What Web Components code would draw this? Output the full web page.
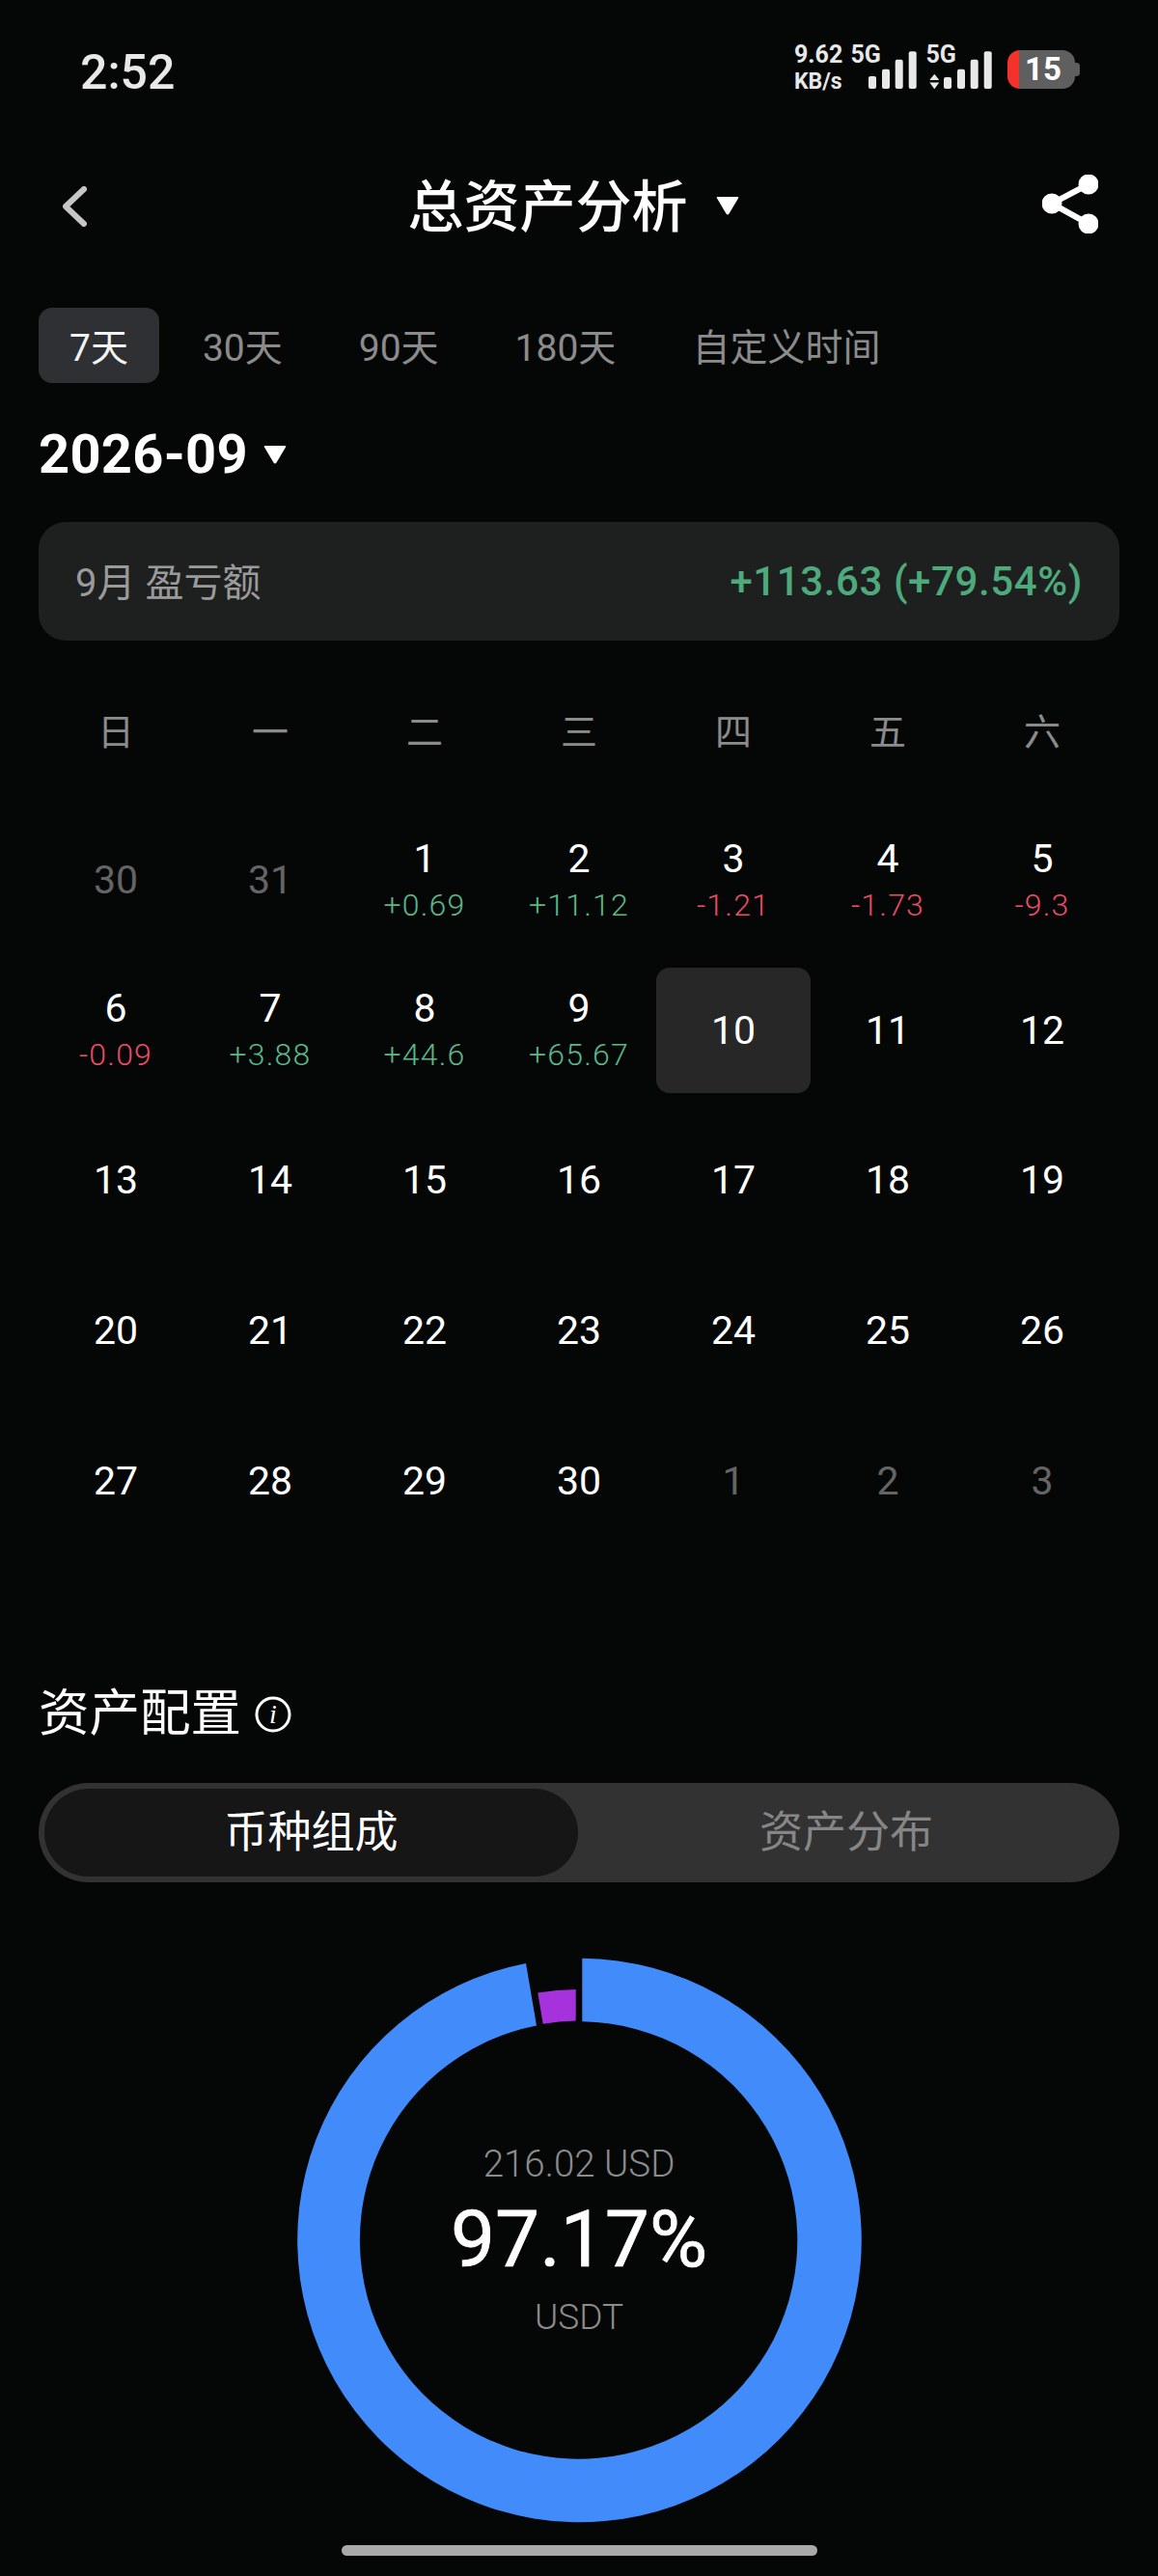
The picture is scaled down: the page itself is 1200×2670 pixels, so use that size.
<!DOCTYPE html>
<html lang="zh">
<head>
<meta charset="utf-8">
<title>总资产分析</title>
<style>
  html, body { margin: 0; height: 2670px; overflow: hidden; background: #050707; }
  body { font-family: Roboto, "Noto Sans CJK SC", sans-serif; color: #fff; }
</style>
</head>
<body>
<status-bar></status-bar>
<nav-header>总资产分析</nav-header>
<range-tabs></range-tabs>
<month-picker>2026-09</month-picker>
<pnl-card label="9月 盈亏额">+113.63 (+79.54%)</pnl-card>
<pnl-calendar></pnl-calendar>
<section-title>资产配置</section-title>
<seg-toggle first="币种组成" second="资产分布"></seg-toggle>
<donut-chart>
  <span slot="amount">216.02 USD</span>
  <span slot="percent">97.17%</span>
  <span slot="coin">USDT</span>
</donut-chart>
<home-bar></home-bar>

<script>
// small helper, every element below uses it for its shadow root
function shadow (el, html) {
  el.attachShadow({ mode: 'open' }).innerHTML = html;
}

class StatusBar extends HTMLElement {
  constructor () {
    super();
    shadow(this, `
    <style>
      :host { display: flex; justify-content: space-between; align-items: flex-start; height: 130px; padding: 0 81px 0 83px; box-sizing: content-box; color: #e8e8e8; }
      .time { font-size: 50px; font-weight: 500; line-height: 50px; margin-top: 50px; }
      .right { display: flex; align-items: flex-start; margin-top: 48px; font-weight: 700; }
      .speed { width: 58.5px; font-size: 25px; line-height: 18px; }
      .speed div + div { margin-top: 10px; font-size: 23px; }
      .net { display: grid; font-size: 25px; line-height: 18px; }
      .net > * { grid-area: 1 / 1; }
      .net svg { display: block; justify-self: end; }
      .one { width: 68.5px; margin-right: 9.5px; }
      .two { width: 68.5px; margin-right: 16px; }
      .battery { display: flex; align-items: center; height: 40px; margin-top: 4px; }
      .cell { width: 70px; height: 40px; border-radius: 13px; background: linear-gradient(90deg, #f4322c 0 12.5px, #5f5f5f 12.5px); color: #fff; font-size: 33px; line-height: 40px; text-indent: 18px; box-sizing: border-box; }
      .nub { width: 5px; height: 14px; background: #5f5f5f; border-radius: 0 4px 4px 0; }
    </style>
    <div class="time">2:52</div>
    <div class="right">
      <div class="speed"><div>9.62</div><div>KB/s</div></div>
      <div class="net one">
        <span>5G</span>
        <svg width="67" height="44" viewBox="0 0 67 44" fill="#e8e8e8">
          <rect x="17" y="31" width="8" height="13" rx="2"/><rect x="31" y="23.7" width="8" height="20.3" rx="2"/>
          <rect x="44.7" y="13.7" width="8" height="30.3" rx="2"/><rect x="58.7" y="5.3" width="8" height="38.7" rx="2"/>
        </svg>
      </div>
      <div class="net two">
        <span>5G</span>
        <svg width="67" height="44" viewBox="0 0 67 44" fill="#e8e8e8">
          <path d="M2.3 35 7.3 28.7 12.3 35ZM2.3 37.5 12.3 37.5 7.3 44.3Z"/>
          <rect x="17" y="32" width="8" height="12" rx="2"/><rect x="31" y="23.7" width="8" height="20.3" rx="2"/>
          <rect x="44.7" y="13.7" width="8" height="30.3" rx="2"/><rect x="58.7" y="5.3" width="8" height="38.7" rx="2"/>
        </svg>
      </div>
      <div class="battery"><div class="cell">15</div><div class="nub"></div></div>
    </div>`);
  }
}
customElements.define('status-bar', StatusBar);

class NavHeader extends HTMLElement {
  constructor () {
    super();
    shadow(this, `
    <style>
      :host { display: grid; grid-template-columns: 1fr auto 1fr; align-items: center; height: 160px; padding: 0 62px 0 65px; }
      .title { display: flex; align-items: center; font-size: 58px; font-weight: 500; margin-right: 15px; white-space: nowrap; }
      .title svg { margin-left: 29px; margin-top: 6px; }
      .back { display: block; margin-top: 8px; }
      .share { display: block; justify-self: end; margin-top: 2px; }
    </style>
    <svg class="back" width="25" height="42" viewBox="0 0 25 42" fill="none" stroke="#c6c6c6" stroke-width="6" stroke-linecap="round" stroke-linejoin="round"><path d="M22 3 3 21 22 39"/></svg>
    <div class="title"><slot></slot><svg width="24" height="19" viewBox="0 0 24 19" fill="#fff"><path d="M1 1.5Q0 0 2 0H22Q24 0 23 1.5L13.5 17.5Q12 19.5 10.5 17.5Z"/></svg></div>
    <svg class="share" width="58" height="61" viewBox="0 0 58 61" fill="#fff" stroke="#fff" stroke-width="6"><path d="M48 10 10 30 48 51" fill="none"/><circle cx="48" cy="10" r="7.5"/><circle cx="10" cy="30" r="7.5"/><circle cx="48" cy="51" r="7.5"/></svg>`);
  }
}
customElements.define('nav-header', NavHeader);

class RangeTabs extends HTMLElement {
  constructor () {
    super();
    const items = ['7天', '30天', '90天', '180天', '自定义时间'];
    shadow(this, `
    <style>
      :host { display: flex; gap: 11px; margin: 29px 40px 0; height: 78px; }
      span { padding: 0 34px; height: 78px; font-size: 39px; line-height: 84px; color: #8b8b8b; border-radius: 14px; }
      .on { padding: 0 32px; background: #2f3033; color: #f2f2f2; }
    </style>
    ${items.map((t, i) => `<span class="${i === 0 ? 'on' : ''}">${t}</span>`).join('')}`);
  }
}
customElements.define('range-tabs', RangeTabs);

class MonthPicker extends HTMLElement {
  constructor () {
    super();
    shadow(this, `
    <style>
      :host { display: flex; align-items: center; margin: 39px 40px 0; height: 70px; font-size: 56px; font-weight: 700; letter-spacing: .3px; line-height: 70px; }
      svg { margin-left: 16px; margin-top: 1px; }
    </style>
    <slot></slot>
    <svg width="24" height="19" viewBox="0 0 24 19" fill="#fff"><path d="M1 1.5Q0 0 2 0H22Q24 0 23 1.5L13.5 17.5Q12 19.5 10.5 17.5Z"/></svg>`);
  }
}
customElements.define('month-picker', MonthPicker);

class PnlCard extends HTMLElement {
  constructor () {
    super();
    shadow(this, `
    <style>
      :host { display: flex; justify-content: space-between; align-items: center; height: 123px; margin: 35px 40px 0; padding: 0 38px 0 38px; border-radius: 28px; background: #1e1f1f; }
      .label { font-size: 40px; color: #9a9a9a; margin-bottom: 3px; }
      .value { font-size: 42px; font-weight: 500; letter-spacing: .6px; color: #4eaa7c; }
    </style>
    <span class="label">${this.getAttribute('label')}</span>
    <span class="value"><slot></slot></span>`);
  }
}
customElements.define('pnl-card', PnlCard);

class DayCell extends HTMLElement {
  constructor () {
    super();
    const sub = this.getAttribute('sub');
    const tone = sub ? (sub[0] === '+' ? 'up' : 'down') : '';
    shadow(this, `
    <style>
      :host { display: flex; flex-direction: column; align-items: center; justify-content: center; height: 130px; padding-bottom: 1px; box-sizing: border-box; border-radius: 14px; color: #fff; font-size: 41px; }
      :host([sub]) { padding-bottom: 0; padding-top: 1px; }
      :host([muted]) { color: #646464; }
      :host([today]) { background: #272727; }
      .num { line-height: 50px; }
      .sub { font-size: 32px; line-height: 47px; font-weight: 300; letter-spacing: 1.2px; }
      .up { color: #58b888; }
      .down { color: #ea4c66; }
    </style>
    <div class="num"><slot></slot></div>
    ${sub ? `<div class="sub ${tone}">${sub}</div>` : ''}`);
  }
}
customElements.define('day-cell', DayCell);

class PnlCalendar extends HTMLElement {
  constructor () {
    super();
    const subs = { 1: '+0.69', 2: '+11.12', 3: '-1.21', 4: '-1.73', 5: '-9.3', 6: '-0.09', 7: '+3.88', 8: '+44.6', 9: '+65.67' };
    let cells = '<day-cell muted>30</day-cell><day-cell muted>31</day-cell>';
    for (let d = 1; d <= 30; d++) {
      const sub = subs[d] ? ` sub="${subs[d]}"` : '';
      cells += `<day-cell${sub}${d === 10 ? ' today' : ''}>${d}</day-cell>`;
    }
    cells += '<day-cell muted>1</day-cell><day-cell muted>2</day-cell><day-cell muted>3</day-cell>';
    shadow(this, `
    <style>
      :host { display: block; margin: 69.5px 40px 0; }
      .week, .days { display: grid; grid-template-columns: repeat(7, 1fr); justify-items: stretch; }
      .week { font-size: 38px; line-height: 50px; color: #8b8b8b; text-align: center; margin-bottom: 64px; }
      .days { row-gap: 25.7px; }
    </style>
    <div class="week"><span>日</span><span>一</span><span>二</span><span>三</span><span>四</span><span>五</span><span>六</span></div>
    <div class="days">${cells}</div>`);
  }
}
customElements.define('pnl-calendar', PnlCalendar);

class SectionTitle extends HTMLElement {
  constructor () {
    super();
    shadow(this, `
    <style>
      :host { display: flex; align-items: center; height: 60px; margin: 146px 40px 0; font-size: 52.5px; line-height: 60px; }
      svg { margin-left: 14px; margin-top: 2px; }
      text { font-family: "Liberation Serif", serif; font-style: italic; }
    </style>
    <slot></slot>
    <svg width="38" height="38" viewBox="0 0 38 38" fill="none"><circle cx="19" cy="19" r="17" stroke="#fff" stroke-width="3"/><text x="19" y="28" font-size="28" fill="#fff" text-anchor="middle">i</text></svg>`);
  }
}
customElements.define('section-title', SectionTitle);

class SegToggle extends HTMLElement {
  constructor () {
    super();
    shadow(this, `
    <style>
      :host { display: grid; grid-template-columns: 553px 1fr; align-items: center; height: 103px; margin: 41.5px 40px 0; padding: 0 0 0 6px; border-radius: 52px; background: #323232; font-size: 45px; box-sizing: content-box; width: 1114px; }
      div { text-align: center; line-height: 91px; }
      .on { height: 91px; border-radius: 46px; background: #161616; color: #fff; }
      .off { color: #868686; padding-right: 5px; }
    </style>
    <div class="on">${this.getAttribute('first')}</div>
    <div class="off">${this.getAttribute('second')}</div>`);
  }
}
customElements.define('seg-toggle', SegToggle);

class DonutChart extends HTMLElement {
  constructor () {
    super();
    shadow(this, `
    <style>
      :host { display: grid; place-items: center; width: 586px; height: 586px; margin: 77.8px auto 0; }
      :host > * { grid-area: 1 / 1; }
      svg { display: block; }
      .mid { display: flex; flex-direction: column; align-items: center; padding-top: 4px; }
      .amount { font-size: 38.5px; line-height: 46px; color: #8c8c8c; font-weight: 300; }
      .percent { font-size: 82px; line-height: 110px; color: #fff; -webkit-text-stroke: .7px #fff; }
      .coin { font-size: 37px; line-height: 52px; color: #8c8c8c; font-weight: 300; }
    </style>
    <svg width="586" height="586" viewBox="-293 -293 586 586">
      <path fill="#418bfb" d="M3.3 -292.3A292.3 292.3 0 1 1 -55 -287L-44 -222.5A226.7 226.7 0 1 0 3.3 -226.7Z"/>
      <path fill="#a532dd" d="M-42.7 -256.5A259.5 259.5 0 0 1 -3.3 -259.9L-3.3 -227.5A227 227 0 0 0 -37.3 -224.3Z"/>
    </svg>
    <div class="mid">
      <div class="amount"><slot name="amount"></slot></div>
      <div class="percent"><slot name="percent"></slot></div>
      <div class="coin"><slot name="coin"></slot></div>
    </div>`);
  }
}
customElements.define('donut-chart', DonutChart);

class HomeBar extends HTMLElement {
  constructor () {
    super();
    shadow(this, `
    <style>
      :host { display: block; width: 493px; height: 11px; margin: 23.2px auto 0; border-radius: 6px; background: #a9a9a9; }
    </style>`);
  }
}
customElements.define('home-bar', HomeBar);
</script>
</body>
</html>
